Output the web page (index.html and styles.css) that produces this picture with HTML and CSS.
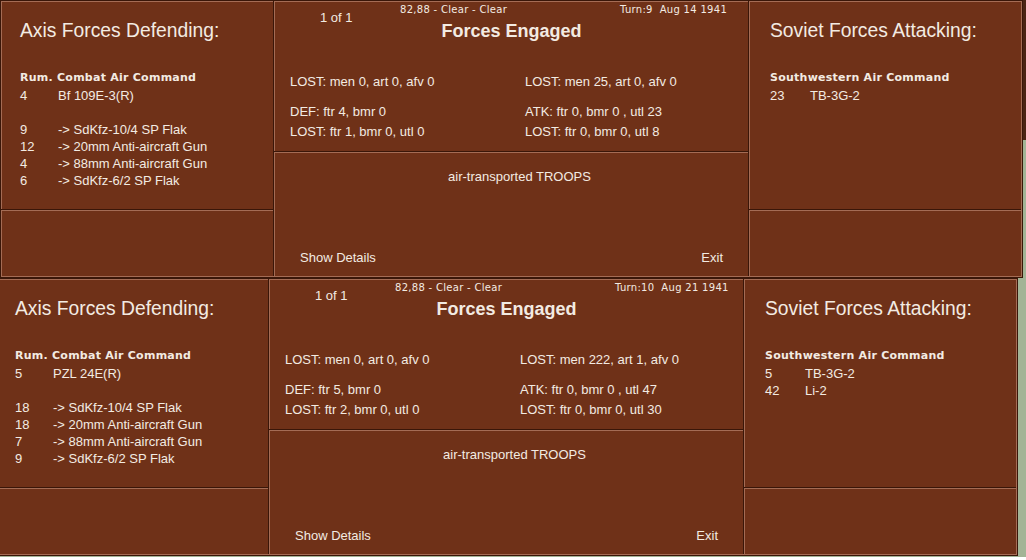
FILE: index.html
```html
<!DOCTYPE html>
<html>
<head>
<meta charset="utf-8">
<link rel="stylesheet" href="styles.css">
</head>
<body>
<div class="desk">
  <section class="panel">
    <div class="frame">
      <div class="col">
        <div class="cell side-top">
          <h2 class="side-title">Axis Forces Defending:</h2>
          <div class="cmd">Rum. Combat Air Command</div>
          <div class="unit"><span class="num">4</span><span>Bf 109E-3(R)</span></div>
          <div class="blank"></div>
          <div class="unit"><span class="num">9</span><span>-&gt; SdKfz-10/4 SP Flak</span></div>
          <div class="unit"><span class="num">12</span><span>-&gt; 20mm Anti-aircraft Gun</span></div>
          <div class="unit"><span class="num">4</span><span>-&gt; 88mm Anti-aircraft Gun</span></div>
          <div class="unit"><span class="num">6</span><span>-&gt; SdKfz-6/2 SP Flak</span></div>
        </div>
        <div class="cell side-bottom"></div>
      </div>
      <div class="col">
        <div class="cell mid-top">
          <div class="mid-head">
            <span class="page">1 of 1</span>
            <span class="small">82,88 - Clear - Clear</span>
            <span class="small">Turn:9  Aug 14 1941</span>
          </div>
          <h1 class="mid-title">Forces Engaged</h1>
          <div class="stats">
            <div>
              <div class="first">LOST: men 0, art 0, afv 0</div>
              <div>DEF: ftr 4, bmr 0</div>
              <div>LOST: ftr 1, bmr 0, utl 0</div>
            </div>
            <div>
              <div class="first">LOST: men 25, art 0, afv 0</div>
              <div>ATK: ftr 0, bmr 0 , utl 23</div>
              <div>LOST: ftr 0, bmr 0, utl 8</div>
            </div>
          </div>
        </div>
        <div class="cell mid-bottom">
          <div class="mission">air-transported TROOPS</div>
          <div class="actions"><span>Show Details</span><span>Exit</span></div>
        </div>
      </div>
      <div class="col">
        <div class="cell side-top right">
          <h2 class="side-title">Soviet Forces Attacking:</h2>
          <div class="cmd">Southwestern Air Command</div>
          <div class="unit"><span class="num">23</span><span>TB-3G-2</span></div>
        </div>
        <div class="cell side-bottom"></div>
      </div>
    </div>
  </section>

  <section class="panel shifted">
    <div class="frame">
      <div class="col">
        <div class="cell side-top">
          <h2 class="side-title">Axis Forces Defending:</h2>
          <div class="cmd">Rum. Combat Air Command</div>
          <div class="unit"><span class="num">5</span><span>PZL 24E(R)</span></div>
          <div class="blank"></div>
          <div class="unit"><span class="num">18</span><span>-&gt; SdKfz-10/4 SP Flak</span></div>
          <div class="unit"><span class="num">18</span><span>-&gt; 20mm Anti-aircraft Gun</span></div>
          <div class="unit"><span class="num">7</span><span>-&gt; 88mm Anti-aircraft Gun</span></div>
          <div class="unit"><span class="num">9</span><span>-&gt; SdKfz-6/2 SP Flak</span></div>
        </div>
        <div class="cell side-bottom"></div>
      </div>
      <div class="col">
        <div class="cell mid-top">
          <div class="mid-head">
            <span class="page">1 of 1</span>
            <span class="small">82,88 - Clear - Clear</span>
            <span class="small">Turn:10  Aug 21 1941</span>
          </div>
          <h1 class="mid-title">Forces Engaged</h1>
          <div class="stats">
            <div>
              <div class="first">LOST: men 0, art 0, afv 0</div>
              <div>DEF: ftr 5, bmr 0</div>
              <div>LOST: ftr 2, bmr 0, utl 0</div>
            </div>
            <div>
              <div class="first">LOST: men 222, art 1, afv 0</div>
              <div>ATK: ftr 0, bmr 0 , utl 47</div>
              <div>LOST: ftr 0, bmr 0, utl 30</div>
            </div>
          </div>
        </div>
        <div class="cell mid-bottom">
          <div class="mission">air-transported TROOPS</div>
          <div class="actions"><span>Show Details</span><span>Exit</span></div>
        </div>
      </div>
      <div class="col">
        <div class="cell side-top right">
          <h2 class="side-title">Soviet Forces Attacking:</h2>
          <div class="cmd">Southwestern Air Command</div>
          <div class="unit"><span class="num">5</span><span>TB-3G-2</span></div>
          <div class="unit"><span class="num">42</span><span>Li-2</span></div>
        </div>
        <div class="cell side-bottom"></div>
      </div>
    </div>
  </section>
</div>
</body>
</html>
```

FILE: styles.css
```css
html {
  background: #ffffff;
}

body {
  margin: 0;
  height: 557px;
  overflow: hidden;
  background: linear-gradient(to bottom, #4a2414 0, #4a2414 140px, #a3b496 140px, #a3b496 100%);
  font-family: "Liberation Sans", Arial, sans-serif;
  color: #f3ebe2;
}

.desk {
  display: flex;
  flex-direction: column;
}

.panel {
  width: 1023px;
  height: 278px;
  box-sizing: border-box;
  border: 1px solid #3a1608;
  background: #3a1608;
  flex: none;
}

.shifted {
  margin-left: -5px;
}

.frame {
  height: 100%;
  box-sizing: border-box;
  border-right: 1px solid #a46c55;
  border-bottom: 1px solid #a46c55;
  display: grid;
  grid-template-columns: 272px 474px 272px;
  column-gap: 1px;
  background: #3a1608;
}

.col {
  display: flex;
  flex-direction: column;
  gap: 1px;
  background: #3a1608;
  min-height: 0;
}

.cell {
  background: #6f3118;
  border-top: 1px solid #a46c55;
  border-left: 1px solid #a46c55;
  box-sizing: border-box;
}

.side-top {
  height: 208px;
  padding: 18px 0 0 18px;
  flex: none;
}

.side-top.right {
  padding-left: 20px;
}

.side-bottom {
  flex: 1;
}

.side-title {
  margin: 0;
  font-size: 19.3px;
  line-height: 22px;
  font-weight: normal;
  white-space: nowrap;
}

.cmd {
  margin-top: 27px;
  margin-bottom: 1px;
  font-family: "DejaVu Sans", Verdana, sans-serif;
  font-weight: bold;
  font-size: 11px;
  letter-spacing: 0.25px;
  line-height: 17px;
}

.unit {
  display: flex;
  font-size: 13px;
  line-height: 17px;
  white-space: nowrap;
}

.num {
  width: 38px;
  flex: none;
}

.right .num {
  width: 40px;
}

.blank {
  height: 17px;
}

.mid-top {
  height: 150px;
  padding-top: 2px;
  flex: none;
}

.mid-head {
  display: grid;
  grid-template-columns: 80px 220px auto;
  padding-left: 45px;
  height: 16px;
  align-items: start;
}

.page {
  margin-top: 6px;
  font-size: 13px;
  line-height: 15px;
}

.small {
  font-family: "DejaVu Sans", Verdana, sans-serif;
  font-size: 10px;
  letter-spacing: 0.3px;
  line-height: 12px;
  white-space: pre;
}

.mid-title {
  margin: 0;
  text-align: center;
  font-size: 18px;
  font-weight: bold;
  line-height: 22px;
}

.stats {
  margin-top: 30px;
  display: grid;
  grid-template-columns: 235px auto;
  padding-left: 15px;
  font-size: 13px;
  line-height: 20px;
  white-space: nowrap;
}

.first {
  margin-bottom: 10px;
}

.mid-bottom {
  flex: 1;
  display: flex;
  flex-direction: column;
}

.mission {
  padding: 16px 0 0 16px;
  text-align: center;
  font-size: 13px;
  line-height: 16px;
}

.actions {
  margin-top: auto;
  display: flex;
  justify-content: space-between;
  padding: 0 25px 10px 25px;
  font-size: 13px;
  line-height: 16px;
}
```
